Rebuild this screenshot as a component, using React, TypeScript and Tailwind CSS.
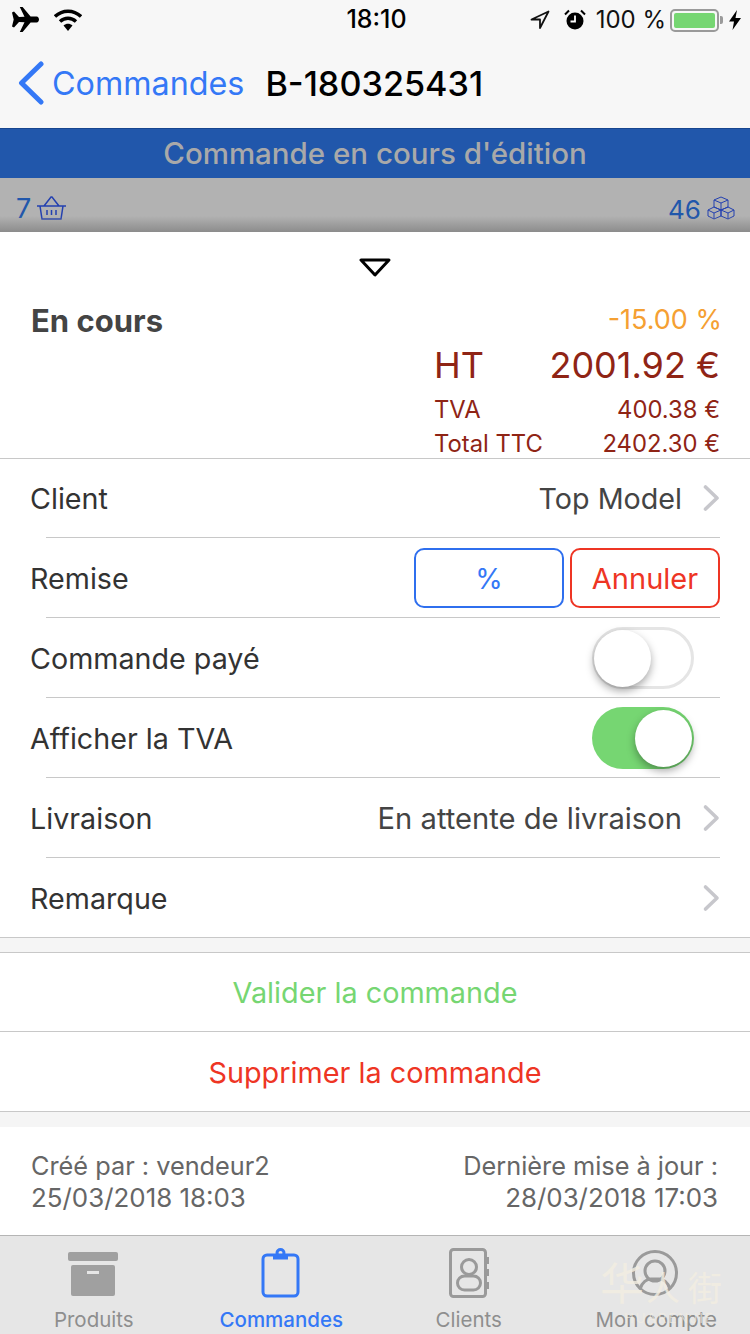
import React from 'react';

const Chevron = () => (
  <svg width="18" height="28" viewBox="0 0 18 28" className="ml-[20px]" fill="none">
    <path d="M3.500 3l11.500 11-11.500 11" stroke="#c7c7cc" strokeWidth="3.600" strokeLinecap="round" strokeLinejoin="round" />
  </svg>
);

const Toggle = ({ on }: { on: boolean }) => (
  <div className={`relative w-[102px] h-[62px] rounded-full ${on ? 'bg-[#76d672]' : 'bg-white border-[3px] border-[#e5e5e5]'}`}>
    <div
      className={`absolute w-[57px] h-[57px] rounded-full bg-white shadow-[0_4px_8px_rgba(0,0,0,0.35)] ${
        on ? 'top-[3px] right-[2px]' : 'top-[0px] left-[-1px]'
      }`}
    />
  </div>
);

const Row = ({ label, children, first, last }: { label: string; children?: React.ReactNode; first?: boolean; last?: boolean }) => (
  <div className={`relative ${first ? 'h-[79px] pb-[1px]' : last ? 'h-[79px] pt-[1px]' : 'h-[80px]'} pl-[30px] pr-[30px] flex items-center justify-between`}>
    <span className="pt-[2px] text-[28.700px] text-[#333333]">{label}</span>
    {children}
    {!last && <div className="absolute bottom-0 left-[46px] right-[30px] h-px bg-[#c8c8c8]" />}
  </div>
);

const Tab = ({ label, active, children }: { label: string; active?: boolean; children: React.ReactNode }) => (
  <div className="flex-1 flex flex-col items-center">
    <div className="h-[62px] flex items-end justify-center">{children}</div>
    <span className={`mt-[8px] text-[20.500px] leading-[28px] ${active ? 'font-medium text-[#3478f6]' : 'text-[#8e8e8e]'}`}>{label}</span>
  </div>
);

export default function App() {
  return (
    <div className="relative w-[750px] h-[1334px] overflow-hidden bg-white font-['Inter','Noto_Sans_CJK_SC',sans-serif]">
      {/* status bar */}
      <div className="h-[40px] bg-[#f7f7f7] relative flex items-center justify-between pl-[12px] pr-[9px]">
        <div className="flex items-center gap-[14px]">
          <svg width="28" height="26" viewBox="0 0 28 26">
            <path d="M0 5.500l2-1 5 5.500 5.500-.2L7.800 0h2.800l8 9.600 6-.1c1.500 0 2.400 1.500 2.400 3s-.9 3-2.400 3l-6-.1-8 9.600H7.800l4.700-9.800L7 15 2 20.500l-2-1 1.700-7z" fill="#000" />
          </svg>
          <svg width="28" height="24" viewBox="0 0 28 24" fill="none">
            <path d="M1 8.500C8.500 1.500 19.500 1.500 27 8.500" stroke="#000" strokeWidth="3.400" />
            <path d="M6 13.500c4.800-4.400 11.200-4.400 16 0" stroke="#000" strokeWidth="3.400" />
            <path d="M9.500 17.500c2.700-2.300 6.300-2.300 9 0L14 23z" fill="#000" />
          </svg>
        </div>
        <span className="absolute left-[3px] right-0 text-center text-[25px] font-medium text-black">18:10</span>
        <div className="flex items-center">
          <svg width="20" height="20" viewBox="0 0 20 20" fill="none" className="mr-[14px]">
            <path d="M18.500 1.500L1.500 9.500h8.500v8.500z" stroke="#111" strokeWidth="1.800" strokeLinejoin="round" />
          </svg>
          <svg width="22" height="22" viewBox="0 0 22 22" className="mr-[10px]">
            <circle cx="11" cy="12" r="8.500" fill="#000" />
            <path d="M11 6.500V12.500H6.500" stroke="#fff" strokeWidth="1.800" fill="none" />
            <path d="M1 5.500L5 1.500M21 5.500L17 1.500" stroke="#000" strokeWidth="2" />
          </svg>
          <span className="text-[24px] text-[#111] mr-[4px]">100 %</span>
          <div className="w-[49px] h-[23px] border-[2px] border-[#9a9a9a] rounded-[5px] p-[2px]">
            <div className="w-full h-full bg-[#76d672] rounded-[2px]" />
          </div>
          <div className="w-[3px] h-[8px] bg-[#9a9a9a] rounded-r-[2px] ml-[1px] mr-[6px]" />
          <svg width="12" height="20" viewBox="0 0 12 20"><path d="M8 0L0 11.500h5L3.500 20 12 8H6.500z" fill="#000" /></svg>
        </div>
      </div>

      {/* nav */}
      <div className="h-[88px] bg-[#f7f7f7] flex items-center pl-[18px]">
        <svg width="26" height="44" viewBox="0 0 26 44" fill="none" className="mb-[2px]">
          <path d="M23 3L3.500 22 23 41" stroke="#3478f6" strokeWidth="5" strokeLinecap="round" strokeLinejoin="round" />
        </svg>
        <span className="ml-[8px] text-[32.300px] text-[#3478f6]">Commandes</span>
        <span className="ml-[21px] text-[34.200px] font-medium text-black">B-180325431</span>
      </div>

      {/* banner */}
      <div className="h-[50px] bg-[#2157ab] border-t border-[#17468f] flex items-center justify-center">
        <span className="text-[29.500px] font-medium text-[#a9a9a9]">Commande en cours d'édition</span>
      </div>

      {/* counters */}
      <div className="relative h-[54px] bg-[#b2b2b2] flex items-center justify-between pl-[16px] pr-[15px] pt-[5px]">
        <div className="flex items-center gap-[5px]">
          <span className="text-[27px] text-[#2157ab] mt-[3px]">7</span>
          <svg width="32" height="26" viewBox="0 0 32 26" fill="none" stroke="#2340b0" strokeWidth="1.500">
            <path d="M1 11h29M4 11l2 13h19l2-13M8 11l7-9h1l7 9M11 15v5M15.500 15v5M20 15v5" />
          </svg>
        </div>
        <div className="flex items-center gap-[6px]">
          <span className="text-[26px] text-[#2157ab] mt-[3px]">46</span>
          <svg width="28" height="24" viewBox="0 0 28 24" fill="none" stroke="#2340b0" strokeWidth="1">
            <path d="M14 1l7 3v7l-7 3-7-3V4zM7 4l7 3 7-3M14 7v7M7 11l7 3v6l-7 3-6-3v-6zM1 14l6 3 7-3M7 17v6M21 11l6 3v6l-6 3-7-3v-6zM14 14l7 3 6-3M21 17v6" />
          </svg>
        </div>
        <div className="absolute left-0 right-0 bottom-0 h-[16px] bg-gradient-to-b from-transparent to-[#8c8c8c]" />
      </div>

      {/* summary */}
      <div className="h-[227px] relative border-b border-[#c8c8c8]">
        <div className="flex justify-center pt-[26px]">
          <svg width="32" height="20" viewBox="0 0 32 20" fill="none">
            <path d="M2 2h28L16 17z" stroke="#000" strokeWidth="3" strokeLinejoin="round" />
          </svg>
        </div>
        <div className="flex justify-between pl-[31px] pr-[30px] mt-[22px]">
          <span className="mt-[1px] text-[31px] font-bold text-[#444444] leading-[40px]">En cours</span>
          <div className="w-[286px] text-[#8f2415]">
            <div className="text-right text-[27px] text-[#f5a032] leading-[40px] mr-[-2px]">-15.00 %</div>
            <div className="flex justify-between text-[36px] leading-[48px] mt-[1px]">
              <span>HT</span>
              <span>2001.92 €</span>
            </div>
            <div className="flex justify-between text-[23.800px] leading-[34px] mt-[4px]">
              <span>TVA</span>
              <span>400.38 €</span>
            </div>
            <div className="flex justify-between text-[23.800px] leading-[34px]">
              <span>Total TTC</span>
              <span>2402.30 €</span>
            </div>
          </div>
        </div>
      </div>

      {/* rows */}
      <div className="border-b border-[#c8c8c8]">
        <Row label="Client" first>
          <div className="flex items-center">
            <span className="pt-[2px] text-[28.700px] text-[#444444]">Top Model</span>
            <Chevron />
          </div>
        </Row>
        <Row label="Remise">
          <div className="flex gap-[6px]">
            <div className="w-[150px] h-[60px] pt-[2px] border-[2px] border-[#2f6fee] rounded-[10px] flex items-center justify-center text-[28px] text-[#3478f6]">%</div>
            <div className="w-[150px] h-[60px] pt-[2px] border-[2px] border-[#ee3524] rounded-[10px] flex items-center justify-center text-[29px] text-[#ee3524]">Annuler</div>
          </div>
        </Row>
        <Row label="Commande payé">
          <div className="mr-[26px]"><Toggle on={false} /></div>
        </Row>
        <Row label="Afficher la TVA">
          <div className="mr-[26px]"><Toggle on /></div>
        </Row>
        <Row label="Livraison">
          <div className="flex items-center">
            <span className="pt-[2px] text-[29.200px] text-[#444444]">En attente de livraison</span>
            <Chevron />
          </div>
        </Row>
        <Row label="Remarque" last>
          <Chevron />
        </Row>
      </div>

      {/* actions */}
      <div className="h-[14px] bg-[#f5f5f5]" />
      <div className="border-t border-[#c8c8c8] h-[79px] pt-[2px] flex items-center justify-center text-[28.800px] text-[#76d672]">Valider la commande</div>
      <div className="border-t border-[#c8c8c8] h-[80px] pt-[2px] flex items-center justify-center text-[28.800px] text-[#ee3524]">Supprimer la commande</div>
      <div className="border-t border-[#c8c8c8] h-[16px] bg-[#f5f5f5]" />

      {/* footer */}
      <div className="h-[108px] flex justify-between pl-[31px] pr-[32px] pt-[23px] text-[25.300px] leading-[32px] text-[#666666]">
        <div>
          <div>Créé par : vendeur2</div>
          <div className="text-[25.900px]">25/03/2018 18:03</div>
        </div>
        <div className="text-right">
          <div>Dernière mise à jour :</div>
          <div className="text-[25.900px]">28/03/2018 17:03</div>
        </div>
      </div>

      {/* tab bar */}
      <div className="h-[99px] bg-[#e6e6e6] border-t border-[#b5b5b5] flex px-0">
        <Tab label="Produits">
          <svg width="50" height="44" viewBox="0 0 50 44" className="mb-[2px] mr-[1px]">
            <rect x="0" y="0" width="50" height="9" rx="2" fill="#a0a0a0" />
            <rect x="3" y="13" width="44" height="31" rx="2" fill="#a0a0a0" />
            <rect x="19" y="19" width="12" height="3" fill="#e6e6e6" />
          </svg>
        </Tab>
        <Tab label="Commandes" active>
          <svg width="40" height="50" viewBox="0 0 40 50" fill="none" stroke="#3478f6" strokeWidth="3">
            <rect x="2" y="7" width="35" height="41" rx="4" />
            <path d="M12 9h15" strokeWidth="5" />
            <circle cx="19.500" cy="5" r="3.500" />
          </svg>
        </Tab>
        <Tab label="Clients">
          <svg width="42" height="50" viewBox="0 0 42 50" fill="none" stroke="#9a9a9a" strokeWidth="3">
            <rect x="2.500" y="1.500" width="35" height="47" rx="3" />
            <path d="M39 9v7M39 21v7M39 34v7" strokeWidth="4" />
            <circle cx="21" cy="19" r="7.500" />
            <rect x="9.500" y="28" width="23" height="14" rx="7" />
          </svg>
        </Tab>
        <Tab label="Mon compte">
          <svg width="48" height="46" viewBox="0 0 48 46" fill="none" stroke="#9a9a9a" strokeWidth="3" className="mb-[2px] mr-[2px]">
            <circle cx="24" cy="23" r="21.500" />
            <circle cx="24" cy="21" r="10" />
            <path d="M9 39c2-7 7-10 11-10h8c4 0 9 3 11 10" />
          </svg>
        </Tab>
      </div>

      {/* watermark */}
      <div className="absolute left-[600px] top-[1262px] w-[145px] text-[#f3eee2] pointer-events-none">
        <div className="flex items-end leading-none opacity-80">
          <span className="text-[44px]">华</span>
          <span className="text-[34px] ml-[2px]">人</span>
          <span className="text-[34px] ml-[8px]">街</span>
        </div>
        <div className="mt-[5px] ml-[24px] text-[13px] leading-[14px] tracking-[2px] opacity-70">HUARENJIE</div>
      </div>
    </div>
  );
}
